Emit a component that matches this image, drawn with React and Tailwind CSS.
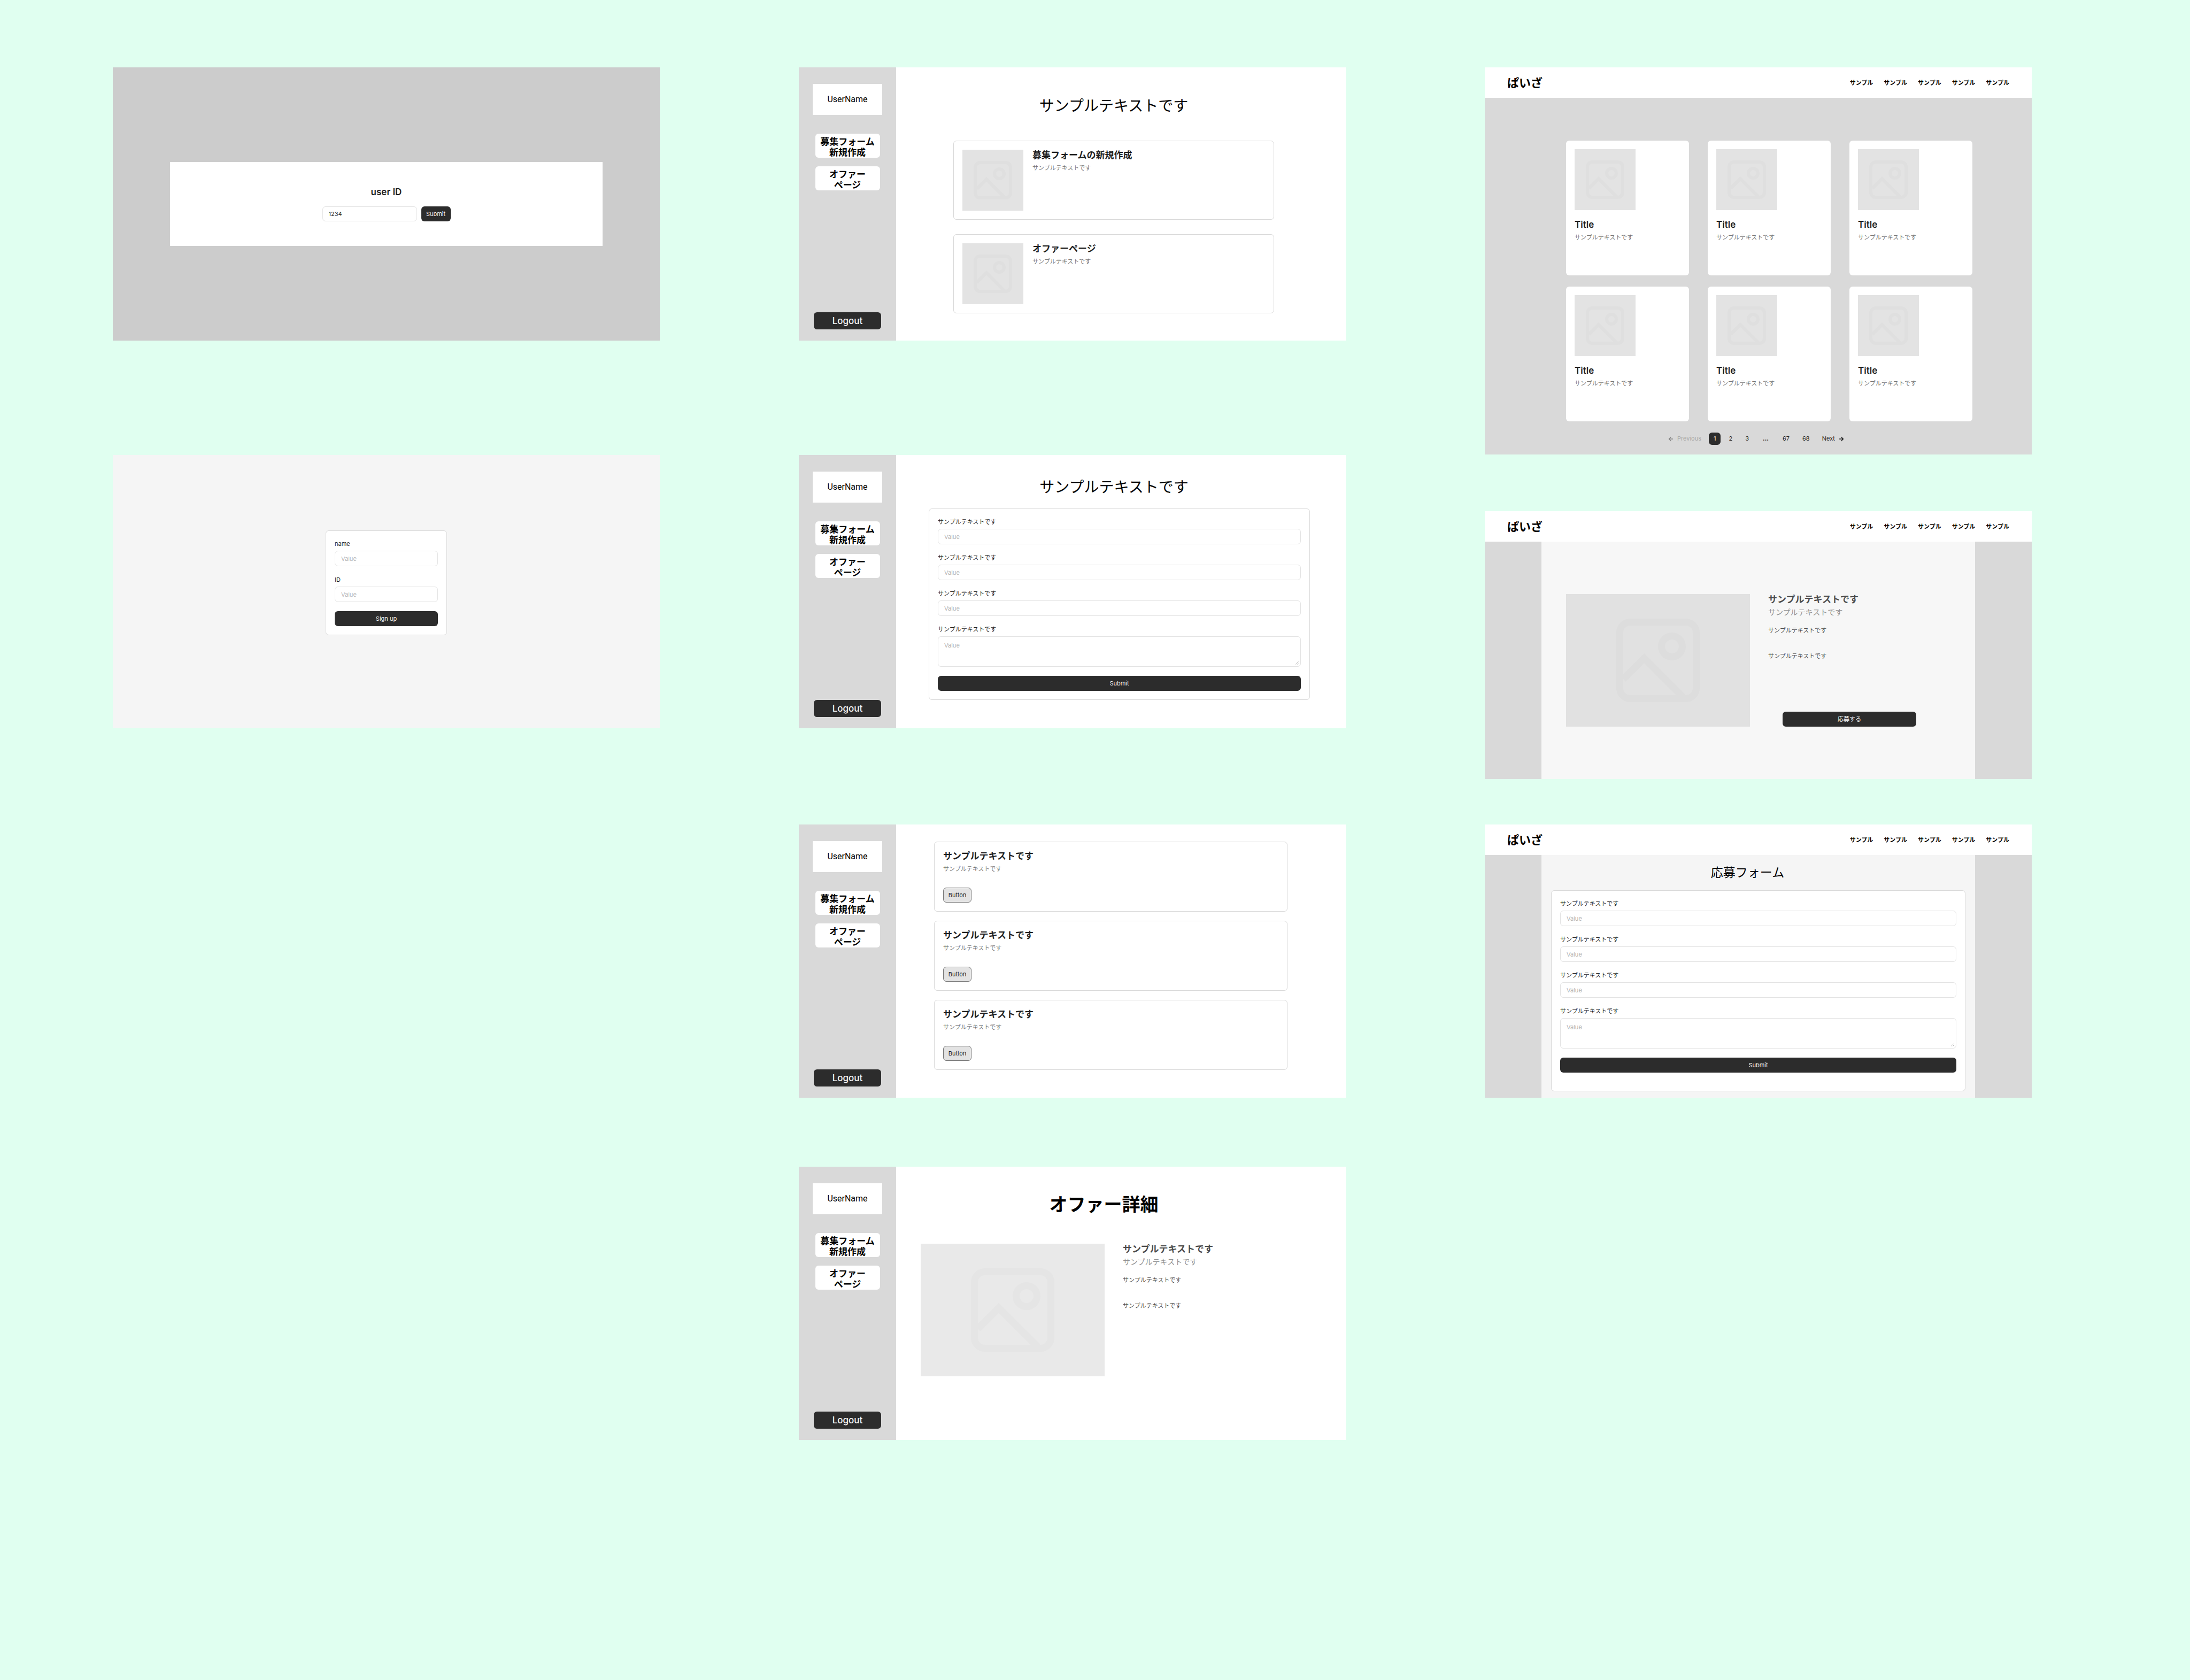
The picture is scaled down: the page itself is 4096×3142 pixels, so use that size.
import { useId } from "react";

const SAMPLE = "サンプルテキストです";

/* ---------- shared pieces ---------- */

function PictureIcon({ className }) {
  return (
    <svg viewBox="0 0 24 24" fill="none" stroke="currentColor" strokeWidth="2" className={className} aria-hidden="true">
      <rect x="1" y="1" width="22" height="22" rx="3" />
      <circle cx="16" cy="8" r="3" />
      <path d="M2 17.4 8 11.4 19.2 22.6" />
    </svg>
  );
}

function Thumbnail() {
  return (
    <div className="flex size-[114px] shrink-0 items-center justify-center bg-[#e3e3e3] text-[#dfdfdf]">
      <PictureIcon className="size-[72px]" />
    </div>
  );
}

function DarkButton({ children, className = "" }) {
  return (
    <button type="button" className={`h-7 rounded-md bg-[#2c2c2c] text-[11px] leading-4 text-[#f5f5f5] ${className}`}>
      {children}
    </button>
  );
}

function Field({ label }) {
  const id = useId();
  return (
    <div className="flex flex-col gap-[5px]">
      <label htmlFor={id} className="text-[11px] leading-4 text-[#1e1e1e]">
        {label}
      </label>
      <input
        id={id}
        type="text"
        placeholder="Value"
        className="h-[29px] w-full rounded-md border border-[#e3e3e3] bg-white px-[11px] text-[11px] leading-4 text-[#1e1e1e] placeholder:text-[#b3b3b3]"
      />
    </div>
  );
}

function TextAreaField({ label }) {
  const id = useId();
  return (
    <div className="flex flex-col gap-[5px]">
      <label htmlFor={id} className="text-[11px] leading-4 text-[#1e1e1e]">
        {label}
      </label>
      <div className="relative flex">
        <textarea
          id={id}
          placeholder="Value"
          className="h-[57px] w-full resize-none rounded-md border border-[#e3e3e3] bg-white px-[11px] py-2 text-[11px] leading-4 text-[#1e1e1e] placeholder:text-[#b3b3b3]"
        />
        <svg viewBox="0 0 6 6" fill="none" stroke="#b3b3b3" className="absolute right-1 bottom-1 size-[6px]" aria-hidden="true">
          <path d="M0.5 5.5 5.5 0.5M3.5 5.5 5.5 3.5" />
        </svg>
      </div>
    </div>
  );
}

function EntryForm({ className = "" }) {
  return (
    <form className={`flex flex-col gap-[17px] rounded-md border border-[#d9d9d9] bg-white px-4 pt-4 ${className}`}>
      <Field label={SAMPLE} />
      <Field label={SAMPLE} />
      <Field label={SAMPLE} />
      <TextAreaField label={SAMPLE} />
      <DarkButton className="w-full">Submit</DarkButton>
    </form>
  );
}

function DetailBlock({ pictureClass, children }) {
  return (
    <div className="flex gap-[34px]">
      <div className={`flex h-[248px] w-[344px] shrink-0 items-center justify-center ${pictureClass}`}>
        <PictureIcon className="size-[156px]" />
      </div>
      <div className="flex grow flex-col">
        <h3 className="text-[17px] leading-5 font-bold text-[#4b4b4b]">{SAMPLE}</h3>
        <p className="mt-1 text-[14px] leading-5 text-[#919191]">{SAMPLE}</p>
        <p className="mt-4 text-[11px] leading-4 text-[#4b4b4b]">{SAMPLE}</p>
        <p className="mt-8 text-[11px] leading-4 text-[#4b4b4b]">{SAMPLE}</p>
        {children}
      </div>
    </div>
  );
}

/* ---------- frames with a side bar ---------- */

function SideButton({ lines }) {
  return (
    <button type="button" className="h-[45px] w-full rounded-md bg-white pt-1 text-[17px] leading-5 font-bold text-black">
      {lines[0]}
      <br />
      {lines[1]}
    </button>
  );
}

function AdminFrame({ children, className = "" }) {
  return (
    <section className={`flex min-h-[511px] bg-white ${className}`}>
      <aside className="flex w-[182px] shrink-0 flex-col items-center bg-[#d9d9d9] pt-[31px] pb-[21px]">
        <div className="flex h-[58px] w-[130px] items-center justify-center bg-white font-['Roboto',sans-serif] text-[16px] leading-5 text-black">
          UserName
        </div>
        <nav className="mt-[35px] flex w-[121px] flex-col gap-4">
          <SideButton lines={["募集フォーム", "新規作成"]} />
          <SideButton lines={["オファー", "ページ"]} />
        </nav>
        <button type="button" className="mt-auto h-8 w-[126px] rounded-md bg-[#2c2c2c] text-[17px] leading-5 font-medium text-[#f5f5f5]">
          Logout
        </button>
      </aside>
      {children}
    </section>
  );
}

function MenuCard({ title }) {
  return (
    <article className="flex gap-[17px] rounded-md border border-[#d9d9d9] bg-white p-4">
      <Thumbnail />
      <div>
        <h3 className="text-[17px] leading-5 font-bold text-[#1e1e1e]">{title}</h3>
        <p className="mt-[6px] text-[11px] leading-4 text-[#757575]">{SAMPLE}</p>
      </div>
    </article>
  );
}

function AdminHome() {
  return (
    <AdminFrame>
      <main className="grow pt-[52px] pr-[134px] pl-[107px]">
        <h1 className="text-center text-[28px] leading-10 text-black">{SAMPLE}</h1>
        <div className="mt-[45px] flex flex-col gap-[27px]">
          <MenuCard title="募集フォームの新規作成" />
          <MenuCard title="オファーページ" />
        </div>
      </main>
    </AdminFrame>
  );
}

function AdminForm() {
  return (
    <AdminFrame className="mt-[214px]">
      <main className="grow pt-10 pr-[67px] pl-[61px]">
        <h1 className="pr-5 text-center text-[28px] leading-10 text-black">{SAMPLE}</h1>
        <EntryForm className="mt-5 pb-4" />
      </main>
    </AdminFrame>
  );
}

function AdminOffers() {
  return (
    <AdminFrame className="mt-[180px]">
      <main className="flex grow flex-col gap-[17px] pt-8 pr-[109px] pl-[71px]">
        {[0, 1, 2].map((n) => (
          <article key={n} className="rounded-md border border-[#d9d9d9] bg-white p-4">
            <h3 className="text-[17px] leading-5 font-bold text-[#1e1e1e]">{SAMPLE}</h3>
            <p className="mt-[6px] text-[11px] leading-4 text-[#757575]">{SAMPLE}</p>
            <button
              type="button"
              className="mt-[27px] block h-7 w-[53px] rounded-md border border-[#767676] bg-[#e3e3e3] text-[11px] leading-4 text-[#1e1e1e]"
            >
              Button
            </button>
          </article>
        ))}
      </main>
    </AdminFrame>
  );
}

function AdminOfferDetail() {
  return (
    <AdminFrame className="mt-[129px]">
      <main className="grow pt-12 pr-[110px] pl-[46px]">
        <h1 className="text-center text-[34px] leading-[46px] font-bold text-black">オファー詳細</h1>
        <div className="mt-[50px]">
          <DetailBlock pictureClass="bg-[#e9e9e9] text-[#e5e5e5]" />
        </div>
      </main>
    </AdminFrame>
  );
}

/* ---------- frames with a top bar ---------- */

function SiteHeader() {
  return (
    <header className="flex h-[57px] items-center justify-between bg-white px-[42px]">
      <a href="#home" className="text-[22px] leading-8 font-bold text-black">
        ぱいざ
      </a>
      <nav className="flex gap-5">
        {[0, 1, 2, 3, 4].map((n) => (
          <a key={n} href="#sample" className="text-[11px] leading-4 font-bold text-black">
            サンプル
          </a>
        ))}
      </nav>
    </header>
  );
}

function Arrow({ d, className = "" }) {
  return (
    <svg
      viewBox="0 0 16 16"
      fill="none"
      stroke="currentColor"
      strokeWidth="1.8"
      strokeLinecap="round"
      strokeLinejoin="round"
      className={`size-3 ${className}`}
      aria-hidden="true"
    >
      <path d={d} />
    </svg>
  );
}

function Pagination() {
  return (
    <nav aria-label="Pagination" className="flex h-[23px] items-stretch justify-center gap-[6px] pr-2 text-[11px] leading-[23px] text-[#1e1e1e]">
      <button type="button" disabled className="flex items-center gap-[6px] px-2 text-[#a8a8a8]">
        <Arrow d="M12.7 8H3.3M8 12.7 3.3 8 8 3.3" className="text-[#858585]" />
        Previous
      </button>
      <a href="#p1" aria-current="page" className="rounded-md bg-[#2c2c2c] px-[9px] text-[#f5f5f5]">
        1
      </a>
      <a href="#p2" className="px-[9px]">
        2
      </a>
      <a href="#p3" className="px-[9px]">
        3
      </a>
      <span className="px-[11px] font-bold text-black">...</span>
      <a href="#p67" className="px-[9px]">
        67
      </a>
      <a href="#p68" className="px-[9px]">
        68
      </a>
      <button type="button" className="flex items-center gap-[6px] px-2">
        Next
        <Arrow d="M3.3 8h9.4M8 3.3 12.7 8 8 12.7" />
      </button>
    </nav>
  );
}

function SiteList() {
  return (
    <section className="min-h-[724px] bg-[#d9d9d9] pb-[18px]">
      <SiteHeader />
      <main>
        <div className="grid grid-cols-3 gap-x-[35px] gap-y-[21px] pt-20 pr-[111px] pl-[152px]">
          {[0, 1, 2, 3, 4, 5].map((n) => (
            <article key={n} className="min-h-[252px] rounded-md bg-white p-4">
              <Thumbnail />
              <h3 className="mt-[17px] text-[17px] leading-5 font-semibold text-[#1e1e1e]">Title</h3>
              <p className="mt-[6px] text-[11px] leading-4 text-[#757575]">{SAMPLE}</p>
            </article>
          ))}
        </div>
        <div className="mt-[21px]">
          <Pagination />
        </div>
      </main>
    </section>
  );
}

function SiteDetail() {
  return (
    <section className="mt-[106px] bg-[#d9d9d9]">
      <SiteHeader />
      <main className="mx-[106px] bg-[#f7f7f7] py-[98px] pl-[46px]">
        <DetailBlock pictureClass="bg-[#e1e1e1] text-[#dddddd]">
          <div className="mt-auto flex flex-col pr-[110px] pl-[27px]">
            <DarkButton>応募する</DarkButton>
          </div>
        </DetailBlock>
      </main>
    </section>
  );
}

function SiteApply() {
  return (
    <section className="mt-[85px] bg-[#d9d9d9]">
      <SiteHeader />
      <main className="mx-[106px] bg-[#f5f5f5] px-[18px] pt-[17px] pb-3">
        <h1 className="pr-10 text-center text-[23px] leading-8 text-black">応募フォーム</h1>
        <EntryForm className="mt-[17px] pb-[34px]" />
      </main>
    </section>
  );
}

/* ---------- log in and sign up ---------- */

function Login() {
  return (
    <section className="flex min-h-[511px] items-center bg-[#cccccc] px-[107px]">
      <form className="flex grow flex-col items-center bg-white py-[46px]">
        <label htmlFor="user-id" className="text-[17px] leading-5 font-semibold text-[#1e1e1e]">
          user ID
        </label>
        <div className="mt-[17px] flex gap-2">
          <input
            id="user-id"
            type="text"
            defaultValue="1234"
            className="h-7 w-[177px] rounded-md border border-[#e3e3e3] bg-white px-[11px] text-[11px] leading-4 text-[#1e1e1e]"
          />
          <DarkButton className="w-[55px]">Submit</DarkButton>
        </div>
      </form>
    </section>
  );
}

function SignUp() {
  return (
    <section className="mt-[214px] flex min-h-[511px] flex-col items-center bg-[#f5f5f5] pt-[141px]">
      <form className="flex w-[227px] flex-col gap-[17px] rounded-md border border-[#d9d9d9] bg-white p-4">
        <Field label="name" />
        <Field label="ID" />
        <DarkButton className="w-full">Sign up</DarkButton>
      </form>
    </section>
  );
}

export default function App() {
  return (
    <div
      lang="ja"
      className="grid min-h-screen grid-cols-3 items-start gap-x-[260px] bg-[#e0fff0] pt-[126px] pr-[296px] pb-32 pl-[211px] font-['Inter','Noto_Sans_CJK_JP',sans-serif]"
    >
      <div>
        <Login />
        <SignUp />
      </div>
      <div>
        <AdminHome />
        <AdminForm />
        <AdminOffers />
        <AdminOfferDetail />
      </div>
      <div>
        <SiteList />
        <SiteDetail />
        <SiteApply />
      </div>
    </div>
  );
}
